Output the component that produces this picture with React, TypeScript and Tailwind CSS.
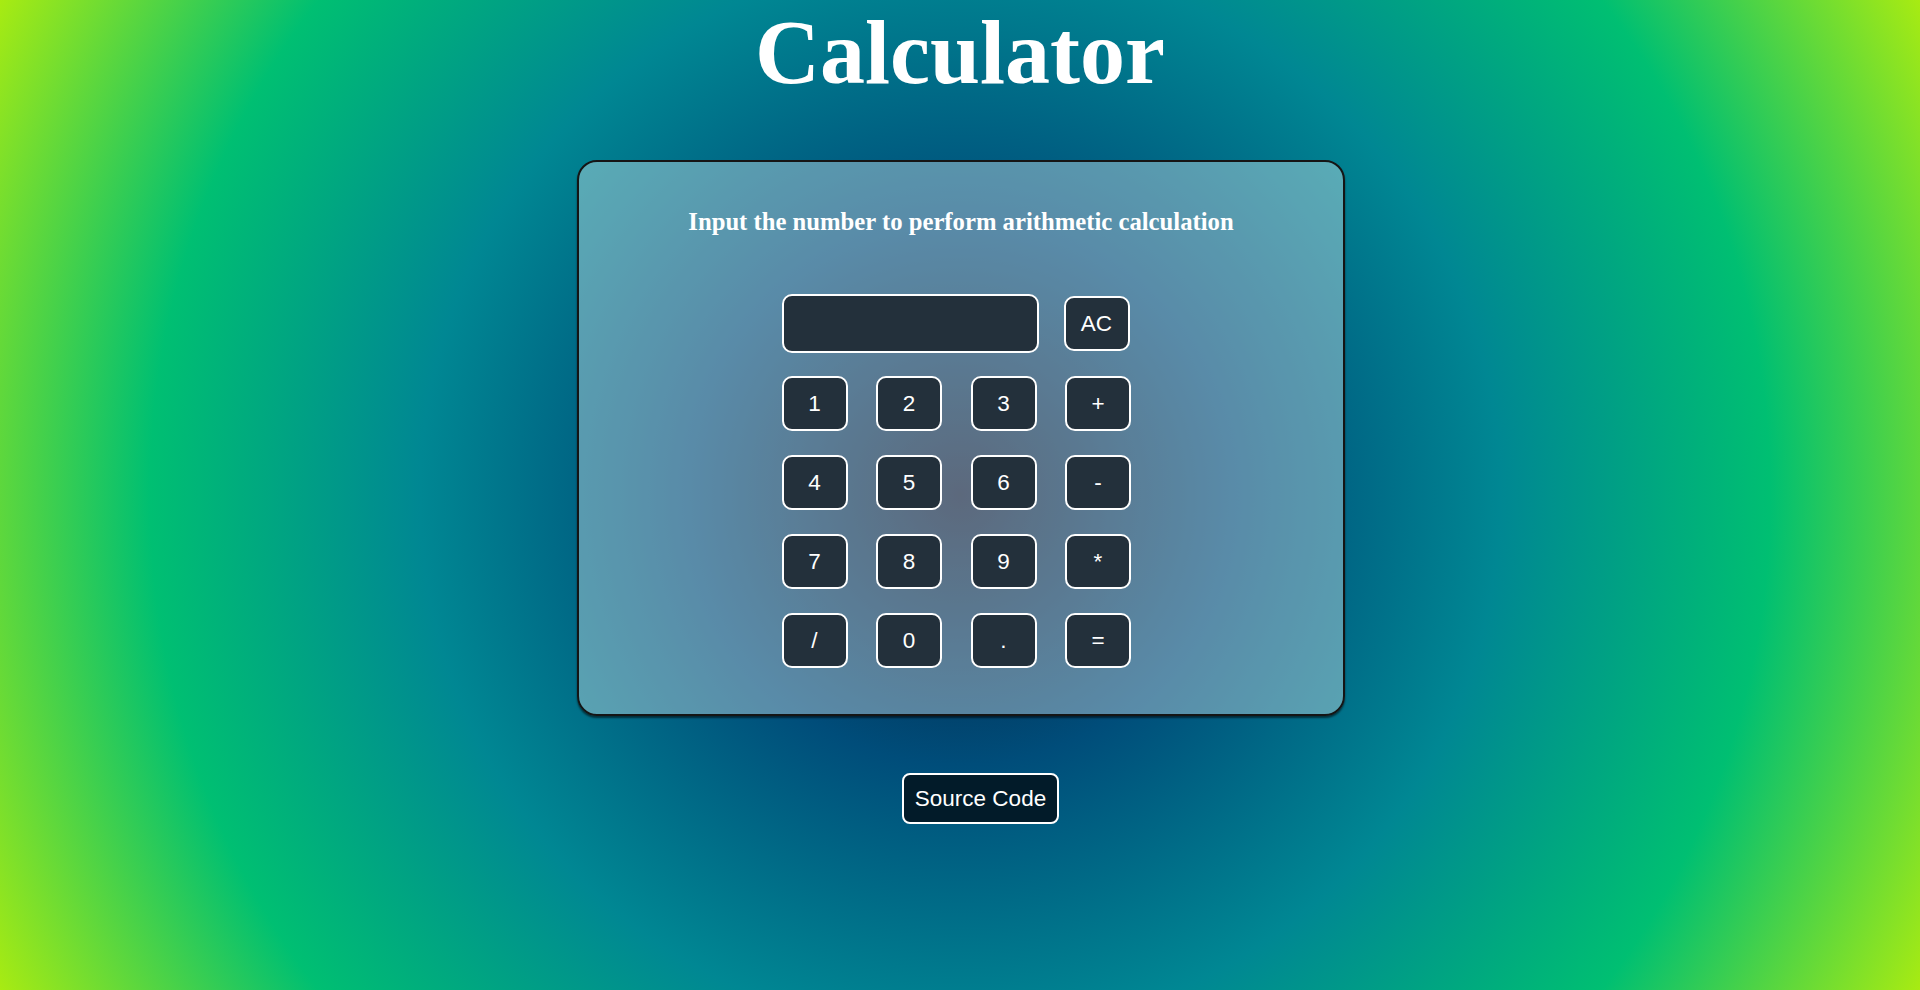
import { useState } from "react";

const keys = ["1", "2", "3", "+", "4", "5", "6", "-", "7", "8", "9", "*", "/", "0", ".", "="];

export default function App() {
  const [value, setValue] = useState("");

  const press = (key: string) => {
    if (key === "=") {
      try {
        // eslint-disable-next-line no-new-func
        const result = Function(`"use strict"; return (${value || "0"})`)();
        setValue(String(result));
      } catch {
        setValue("Error");
      }
      return;
    }
    setValue((prev) => (prev === "Error" ? key : prev + key));
  };

  return (
    <div className="flex min-h-screen w-full flex-col items-center bg-[radial-gradient(circle,#051937,#004d7a,#008793,#00bf72,#a8eb12)] font-['Liberation_Serif',serif]">
      <h1 className="pt-px text-[90px] font-bold leading-[103px] text-white">Calculator</h1>

      <div className="ml-[2px] mt-[56px] flex h-[556px] w-[768px] flex-col items-center rounded-[20px] border-2 border-[#151515] bg-white/35 pt-[45px] shadow-[0_2px_2px_rgba(0,0,0,0.55)]">
        <h2 className="text-[24.7px] font-bold leading-[29px] text-white">
          Input the number to perform arithmetic calculation
        </h2>

        <div className="mr-[3px] mt-[58px] w-[356px] font-['Liberation_Sans',Arial,sans-serif]">
          <div className="flex items-center gap-[25px]">
            <input
              readOnly
              value={value}
              className="h-[59px] w-[257px] rounded-[10px] border-2 border-white bg-[#23303b] px-3 text-right text-[22.5px] text-white outline-none"
            />
            <button
              type="button"
              onClick={() => setValue("")}
              className="h-[55px] w-[66px] rounded-[10px] border-2 border-white bg-[#23303b] text-[22.5px] text-white"
            >
              AC
            </button>
          </div>

          <div className="mt-[23px] grid grid-cols-[repeat(4,67px)] gap-x-[27.5px] gap-y-[24px]">
            {keys.map((key) => (
              <button
                key={key}
                type="button"
                onClick={() => press(key)}
                className="h-[55px] w-[66px] rounded-[10px] border-2 border-white bg-[#23303b] text-[22.5px] text-white"
              >
                {key}
              </button>
            ))}
          </div>
        </div>
      </div>

      <button
        type="button"
        className="ml-[41px] mt-[57px] h-[51px] w-[157px] rounded-[8px] border-2 border-white bg-[#021b29] font-['Liberation_Sans',Arial,sans-serif] text-[22.5px] text-white"
      >
        Source Code
      </button>
    </div>
  );
}
